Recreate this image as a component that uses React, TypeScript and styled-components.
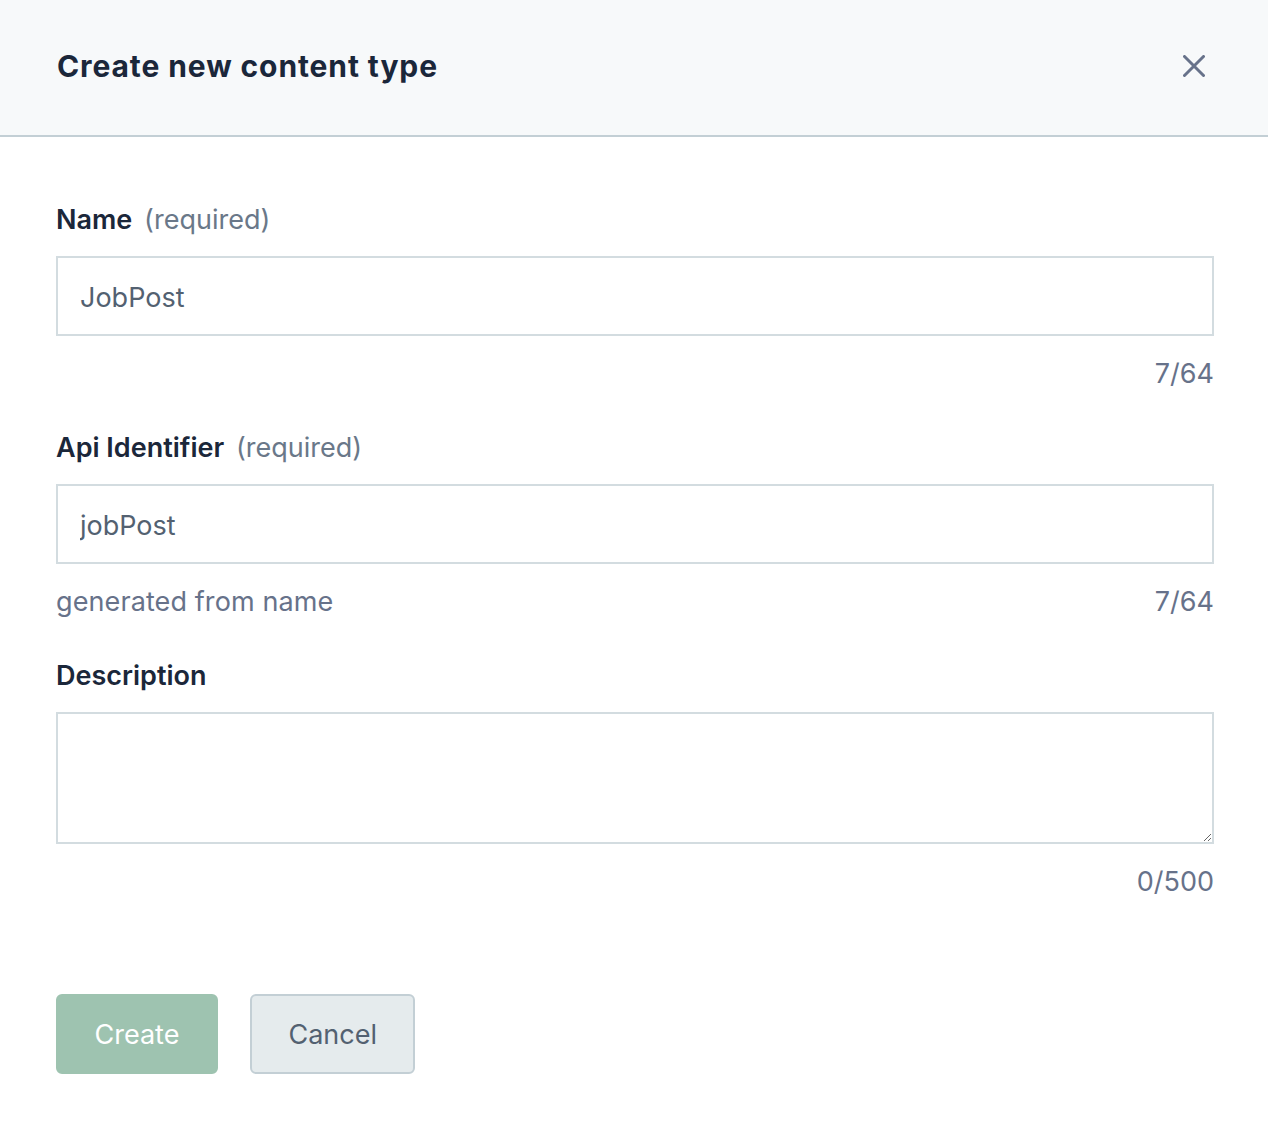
import React, { useState, ChangeEvent } from "react";
import styled, { createGlobalStyle } from "styled-components";

const GlobalStyle = createGlobalStyle`
  html, body {
    margin: 0;
    padding: 0;
    background: #ffffff;
    font-family: Inter, "Noto Sans", "Liberation Sans", sans-serif;
    -webkit-font-smoothing: antialiased;
  }
`;

const CreateContentType = () => {
  const [name, setName] = useState("JobPost");
  const [apiId, setApiId] = useState("jobPost");
  const [description, setDescription] = useState("");

  const handleNameChange = (event: ChangeEvent<HTMLInputElement>) => {
    setName(event.target.value);
  };
  const handleApiIdChange = (event: ChangeEvent<HTMLInputElement>) => {
    setApiId(event.target.value);
  };
  const handleDescriptionChange = (event: ChangeEvent<HTMLTextAreaElement>) => {
    setDescription(event.target.value);
  };

  return (
    <Modal>
      <GlobalStyle />
      <Header>
        <Title>Create new content type</Title>
        <CloseButton aria-label="Close">
          <svg width="22" height="22" viewBox="0 0 22 22">
            <path
              d="M1.5 1.5 L20.5 20.5 M20.5 1.5 L1.5 20.5"
              stroke="#67728a"
              strokeWidth="3"
              strokeLinecap="round"
            />
          </svg>
        </CloseButton>
      </Header>
      <Body>
        <Field>
          <Label>
            Name <Hint>(required)</Hint>
          </Label>
          <TextInput value={name} onChange={handleNameChange} />
          <HelpRow>
            <span />
            <Counter>{name.length}/64</Counter>
          </HelpRow>
        </Field>
        <Field>
          <Label>
            Api Identifier <Hint>(required)</Hint>
          </Label>
          <TextInput value={apiId} onChange={handleApiIdChange} />
          <HelpRow>
            <HelpText>generated from name</HelpText>
            <Counter>{apiId.length}/64</Counter>
          </HelpRow>
        </Field>
        <Field>
          <Label>Description</Label>
          <TextArea value={description} onChange={handleDescriptionChange} />
          <HelpRow>
            <span />
            <Counter>{description.length}/500</Counter>
          </HelpRow>
        </Field>
        <Actions>
          <Button variant="primary" disabled>
            Create
          </Button>
          <Button variant="secondary">Cancel</Button>
        </Actions>
      </Body>
    </Modal>
  );
};

const Modal = styled.div`
  width: 1268px;
  min-height: 1130px;
  background: #ffffff;
`;
const Header = styled.div`
  height: 135px;
  background: #f7f9fa;
  border-bottom: 2px solid #c3cfd5;
  display: flex;
  align-items: center;
  justify-content: space-between;
  box-sizing: border-box;
  height: 137px;
  padding: 0 63px 4px 57px;
`;
const Title = styled.h1`
  margin: 0;
  font-size: 30px;
  font-weight: 700;
  color: #1b273a;
  letter-spacing: 0.9px;
`;
const CloseButton = styled.button`
  background: none;
  border: none;
  padding: 0;
  width: 22px;
  height: 22px;
  cursor: pointer;
  display: flex;
`;
const Body = styled.div`
  padding: 63px 54px 0 56px;
  display: flex;
  flex-direction: column;
`;
const Field = styled.div`
  display: flex;
  flex-direction: column;
  margin-bottom: 34px;
`;
const Label = styled.label`
  font-size: 27px;
  line-height: 40px;
  font-weight: 600;
  color: #1b273a;
  margin-bottom: 16px;
`;
const Hint = styled.span`
  font-weight: 400;
  color: #6a7889;
  margin-left: 5px;
`;
const TextInput = styled.input`
  box-sizing: border-box;
  height: 80px;
  width: 100%;
  border: 2px solid #d3dce0;
  border-radius: 0;
  padding: 3px 22px 0;
  font-family: inherit;
  font-size: 27px;
  color: #536171;
  outline: none;
`;
const TextArea = styled.textarea`
  box-sizing: border-box;
  height: 132px;
  width: 100%;
  border: 2px solid #d3dce0;
  border-radius: 0;
  padding: 18px 22px;
  font-family: inherit;
  font-size: 27px;
  color: #536171;
  outline: none;
  resize: vertical;
`;
const HelpRow = styled.div`
  display: flex;
  justify-content: space-between;
  margin-top: 18px;
  font-size: 27px;
  line-height: 40px;
  color: #67728a;
`;
const HelpText = styled.span`
  letter-spacing: 0.1px;
`;
const Counter = styled.span``;
const Actions = styled.div`
  display: flex;
  gap: 32px;
  margin-top: 58px;
`;
const Button = styled.button<{ variant: "primary" | "secondary" }>`
  box-sizing: border-box;
  height: 80px;
  padding: 0 36.5px;
  border-radius: 6px;
  font-family: inherit;
  font-size: 27px;
  cursor: pointer;
  border: 2px solid
    ${(p) => (p.variant === "primary" ? "#9ec3b0" : "#c3cfd5")};
  background: ${(p) => (p.variant === "primary" ? "#9ec3b0" : "#e5ebed")};
  color: ${(p) => (p.variant === "primary" ? "#ffffff" : "#536171")};
  &:disabled {
    cursor: not-allowed;
  }
`;

export default CreateContentType;
